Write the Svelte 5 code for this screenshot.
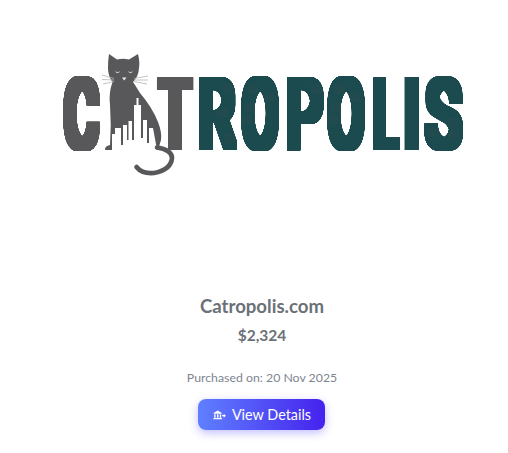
<script lang="ts">
	const FONT_SIZE = 91.5;
	const DILATE_X = 4.6;

	// ink is the glyph's share of an em in Roboto, used to squeeze each letter to its box
	const letters = [
		{ ch: 'C', x: 63, w: 37, ink: 0.56, dark: true },
		{ ch: 'T', x: 157, w: 36, ink: 0.56, dark: true },
		{ ch: 'R', x: 198, w: 38, ink: 0.53 },
		{ ch: 'O', x: 241, w: 38, ink: 0.58 },
		{ ch: 'P', x: 285, w: 38, ink: 0.52 },
		{ ch: 'O', x: 327, w: 38, ink: 0.58 },
		{ ch: 'L', x: 372, w: 27, ink: 0.44 },
		{ ch: 'I', x: 405, w: 14, ink: 0.07 },
		{ ch: 'S', x: 425, w: 37, ink: 0.5 }
	];

	function letterTransform(l: { x: number; w: number; ink: number }) {
		const sx = (l.w - DILATE_X * 2) / (l.ink * FONT_SIZE);
		return `translate(${l.x + l.w / 2} 146) scale(${sx.toFixed(3)} 1)`;
	}
</script>

<div class="page">
	<svg class="logo" viewBox="0 0 508 190" role="img" aria-label="Catropolis logo">
		<defs>
			<filter id="widen" x="-20%" y="-5%" width="140%" height="110%">
				<feComponentTransfer>
					<feFuncA type="table" tableValues="0 1 1 1" />
				</feComponentTransfer>
				<feMorphology operator="dilate" radius="4.6 4" />
				<feGaussianBlur stdDeviation="0.6" />
			</filter>
			<filter id="soft" x="-5%" y="-5%" width="110%" height="110%">
				<feGaussianBlur stdDeviation="0.4" />
			</filter>
		</defs>

		<g filter="url(#widen)">
			{#each letters as l}
				<text class="letter" class:dark={l.dark} transform={letterTransform(l)}>{l.ch}</text>
			{/each}
		</g>

		<g filter="url(#soft)">
			<path
				class="cat"
				d="M109 54 L117 59.5 Q123 58 129 59.5 L138 54 Q140 62 139 68 Q138.5 77 133 82 L135 85 L140 93 Q152 107 158 122 Q162 132 161 140 L158 150 L105 150 Q104.5 146 110 145 Q111.5 125 110 105 Q108.5 93 112.5 82 Q108 76 108 68 Q108 60 109 54 Z"
			/>
			<path
				class="cut"
				d="M112 155 V134 H115 V128 H121 V145 H123 V125 H127 V140 H128.5 V121 H132 V140 H134 V105 H136.5 V98 H138.5 V105 H141 V138 H143 V120 H147 V143 H149 V128 H153 L156.5 147 V155 Z"
			/>
			<path class="tail" d="M157 147.5 Q172 150 172 158 Q171 170 154 173 Q142 174 136.5 167" />
			<path class="eye" d="M114.8 71 Q117.5 75.5 120.2 71 Q117.5 73 114.8 71 Z" />
			<path class="eye" d="M127.8 71 Q130.5 75.5 133.2 71 Q130.5 73 127.8 71 Z" />
			<path class="nose" d="M122 77.5 H126.5 L124.2 80.5 Z" />
			<path
				class="whisker"
				d="M102 75 L114 78.5 M102 79.5 L114 80 M103 84 L114 81.5 M134 78.5 L148 76 M134 80 L148 80 M134 81.5 L147 84"
			/>
		</g>
	</svg>

	<div class="info">
		<h2>Catropolis.com</h2>
		<p class="price">$2,324</p>
		<p class="date">Purchased on: 20 Nov 2025</p>
		<button type="button">
			<svg class="bank" viewBox="0 0 14 11" aria-hidden="true">
				<path d="M0.5 3.2 L5 0.5 L9.5 3.2 V4 H0.5 Z M1.2 4.6 H2.7 V8.4 H1.2 Z M4.2 4.6 H5.8 V8.4 H4.2 Z M7.3 4.6 H8.8 V8.4 H7.3 Z M0.3 8.9 H9.7 V10.3 H0.3 Z" />
				<path d="M9.8 5.6 H11.6 V4 L14 6.2 L11.6 8.4 V6.8 H9.8 Z" />
			</svg>
			View Details
		</button>
	</div>
</div>

<style>
	:global(body) {
		background: #fff;
	}

	.page {
		width: 508px;
		height: 453px;
		overflow: hidden;
		display: flex;
		flex-direction: column;
		align-items: center;
		font-family: Lato, 'Open Sans', sans-serif;
	}

	.logo {
		display: block;
		width: 508px;
		height: 190px;
		flex: none;
	}

	.letter {
		font-family: Roboto, sans-serif;
		font-weight: 300;
		font-size: 91.5px;
		text-anchor: middle;
		fill: #1f4b4f;
	}

	.letter.dark {
		fill: #58585a;
	}

	.cat {
		fill: #58585a;
	}

	.tail {
		fill: none;
		stroke: #58585a;
		stroke-width: 4.6;
		stroke-linecap: round;
	}

	.cut {
		fill: #fff;
	}

	.eye {
		fill: #c4c6c2;
	}

	.nose {
		fill: #ececec;
	}

	.whisker {
		fill: none;
		stroke: #b4b4b4;
		stroke-width: 0.8;
	}

	.info {
		display: flex;
		flex-direction: column;
		align-items: center;
		padding: 104px 0 0 16px;
		color: #6c7178;
	}

	h2 {
		margin: 0;
		font-size: 18.6px;
		line-height: 24px;
		font-weight: 700;
	}

	.price {
		margin: 6px 0 0;
		font-size: 15.5px;
		line-height: 22px;
		font-weight: 700;
	}

	.date {
		margin: 23px 0 0;
		font-size: 12.3px;
		line-height: 18px;
		color: #7d8590;
	}

	button {
		margin-top: 12px;
		width: 127px;
		height: 31px;
		display: flex;
		align-items: center;
		justify-content: center;
		gap: 6px;
		border: 0;
		border-radius: 8px;
		background: linear-gradient(90deg, #5f80ff, #4522ee);
		box-shadow: 0 3px 8px rgba(80, 70, 240, 0.35);
		color: #fff;
		font-family: inherit;
		font-size: 14.4px;
		padding: 0;
	}

	.bank {
		width: 13px;
		height: 10px;
		fill: #fff;
	}
</style>
